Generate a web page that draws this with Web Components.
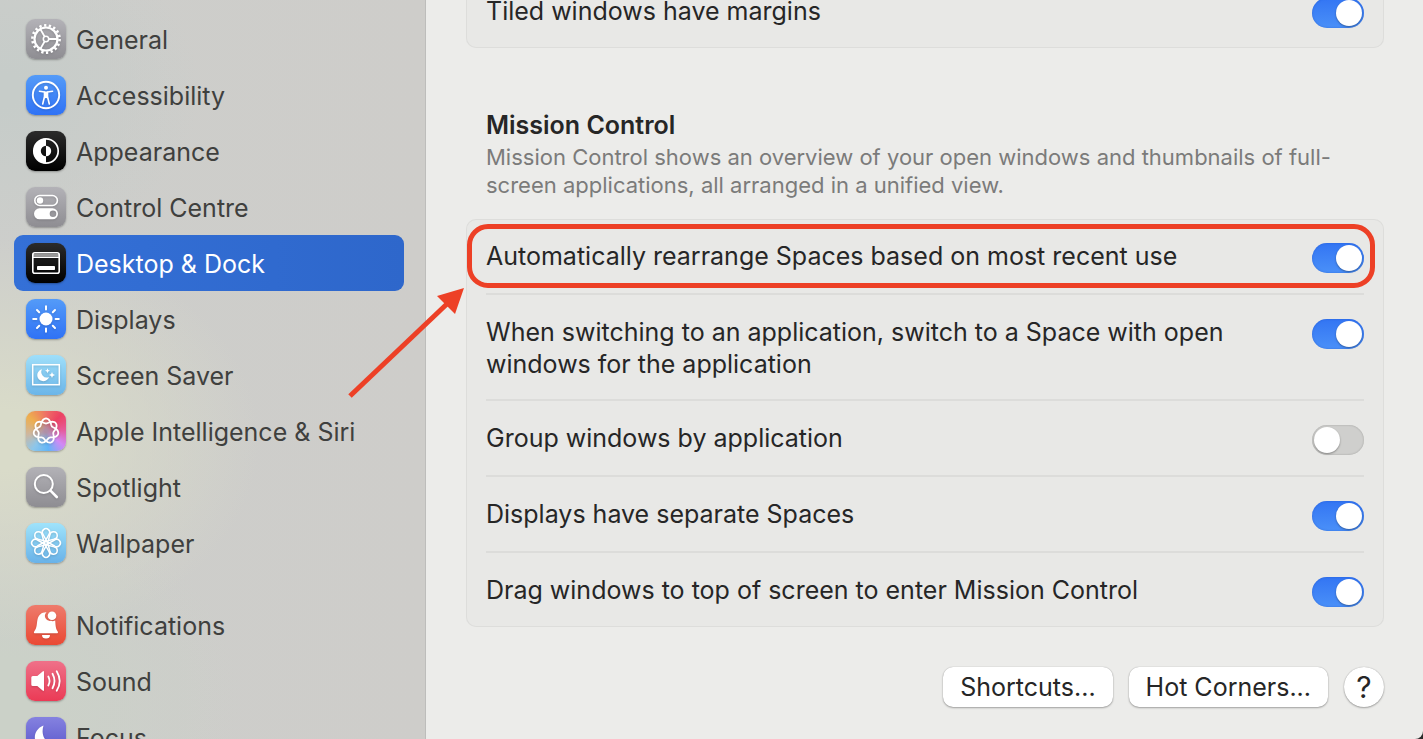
<!DOCTYPE html>
<html lang="en-GB">
<head>
<meta charset="utf-8">
<title>Desktop &amp; Dock</title>
<style>
  html, body { height: 100%; }
  body {
    margin: 0;
    overflow: hidden;
    background: #2a2a2a;
    font-family: Inter, "Liberation Sans", sans-serif;
    font-size: 25px;
    line-height: 32px;
    color: #262626;
  }
</style>
</head>
<body>
<settings-window></settings-window>

<script>
/* Closed curve that winds twice round the centre and forms seven crossing lobes. */
const knot = 'M' + Array.from({length: 168}, (_, i) => {
  const t = i / 168 * 4 * Math.PI, r = 10 + 2.5 * Math.cos(3.5 * t);
  return (20 + r * Math.sin(t)).toFixed(2) + ' ' + (20 - r * Math.cos(t)).toFixed(2);
}).join('L') + 'Z';

const icons = {
  general: ['#b3b2b7', '#8e8d92', `
    <g fill="none" stroke="#fff">
      <circle cx="20" cy="20" r="11.5" stroke-width="2.2"/>
      <circle cx="20" cy="20" r="13.6" stroke-width="2.6" stroke-dasharray="2.3 2.447"/>
      <circle cx="20" cy="20" r="2.7" stroke-width="1.6"/>
      <path d="M23 20h8M18.500 17.400l-4-7M18.500 22.600l-4 7" stroke-width="1.9"/>
    </g>`],
  accessibility: ['#549bf8', '#2f72f5', `
    <circle cx="20" cy="20" r="13.2" fill="none" stroke="#fff" stroke-width="1.9"/>
    <circle cx="20" cy="12.700" r="2" fill="#fff"/>
    <path d="M13.500 16.200l5 .8v4.500l-1.800 7.500M26.500 16.200l-5 .8v4.500l1.800 7.500" fill="none" stroke="#fff" stroke-width="1.600" stroke-linecap="round" stroke-linejoin="round"/>
    <path d="M18 16.500h4v7l-2-.5-2 .5z" fill="#fff"/>`],
  appearance: ['#2b2b2b', '#000', `
    <circle cx="20" cy="20" r="12.200" fill="none" stroke="#fff" stroke-width="1.700"/>
    <path d="M20 7.500a12.500 12.500 0 0 0 0 25v-7.300a5.200 5.200 0 0 1 0-10.400z" fill="#fff"/>
    <path d="M20 14.800a5.200 5.200 0 0 1 0 10.400z" fill="#fff"/>`],
  control: ['#b3b2b7', '#8e8d92', `
    <rect x="8.800" y="8.500" width="22.600" height="10" rx="5" fill="none" stroke="#fff" stroke-width="1.600"/>
    <circle cx="14" cy="13.500" r="3.200" fill="#fff"/>
    <path d="M13.500 21.300h13a5.500 5.500 0 0 1 0 11h-13a5.500 5.500 0 0 1 0-11zm13.500 2.200a3.300 3.300 0 1 0 0 6.600 3.300 3.300 0 0 0 0-6.600z" fill="#fff" fill-rule="evenodd"/>`],
  dock: ['#2b2b2b', '#000', `
    <rect x="6.800" y="9.800" width="26.400" height="20.400" rx="2" fill="none" stroke="#fff" stroke-width="1.600"/>
    <path d="M7 11h26v4H7z" fill="#fff" opacity=".55"/><path d="M7 14.500h26" stroke="#fff"/>
    <rect x="11" y="23" width="18" height="4" rx=".8" fill="#fff"/>`],
  displays: ['#549bf8', '#2f72f5', `
    <circle cx="20" cy="20" r="6.500" fill="#fff"/>
    <path d="M20 7.200v3.200M20 29.600v3.200M7.200 20h3.200M29.600 20h3.200M11 11l2.200 2.200M26.800 26.800l2.200 2.200M29 11l-2.200 2.200M13.200 26.800L11 29" stroke="#fff" stroke-width="2" stroke-linecap="round"/>`],
  saver: ['#9fdffa', '#6bb5e8', `
    <rect x="6.700" y="9.700" width="26.600" height="20" fill="none" stroke="#fff" stroke-width="1.500"/>
    <path d="M16 14.300a6 6 0 1 0 7 7.700 5.500 5.500 0 0 1-7-7.700z" fill="#fff"/>
    <path d="M21.500 13.300l.7 1.800 1.800.7-1.800.7-.7 1.800-.7-1.800-1.800-.7 1.800-.7zM26 17l.9 2.100 2.100.9-2.100.9L26 23l-.9-2.100L23 20l2.100-.9z" fill="#fff"/>`],
  siri: ['', '', `<path d="${knot}" fill="none" stroke="#fff" stroke-width="1.800"/>`],
  spotlight: ['#b3b2b7', '#8e8d92', `
    <circle cx="17.800" cy="17" r="9" fill="none" stroke="#fff" stroke-width="2"/>
    <path d="M24.500 23.700l6.300 6.300" stroke="#fff" stroke-width="2.600" stroke-linecap="round"/>`],
  wallpaper: ['#9fe3fb', '#69b2e8', `
    <g fill="none" stroke="#fff" stroke-width="1.500">${
      Array.from({length: 8}, (_, i) => `<path transform="rotate(${i * 45} 20 20)" d="M21.500 19.500L17 11.500A3.700 3.700 0 1 1 23 11.500L18.500 19.500"/>`).join('')}</g>`],
  notifications: ['#ee7b6c', '#ea4934', `
    <path d="M20.500 7.300a5 5 0 0 0 4.500 8.500q1.800.8 4.200-.3c.4 6 .6 8.500 2.500 11 .6.900.2 1.800-.8 1.800H9c-1 0-1.400-.9-.8-1.800 3-3.800 2.300-7 3.300-12C12.500 9.800 16 7 20.500 7.300z" fill="#fff"/>
    <circle cx="26" cy="10.800" r="4.300" fill="#fff"/>
    <path d="M16 30h8a4 3.500 0 0 1-8 0z" fill="#fff"/>`],
  sound: ['#ef7189', '#eb3a55', `
    <path d="M5.300 16.500q0-1.500 1.500-1.500h4.500l5.300-4.500q1.400-1 1.400.6v17.800q0 1.600-1.400.6L11.300 25H6.800q-1.500 0-1.500-1.500z" fill="#fff"/>
    <path d="M22.300 15.500q2.500 4.500 0 9M26.500 12.800q4 7.200 0 14.400M30.700 10.200q6 9.800 0 19.600" fill="none" stroke="#fff" stroke-width="1.800" stroke-linecap="round"/>`],
  focus: ['#8582e0', '#5450c8', `
    <path d="M17.500 8.500C11 11 8 17 9 22.500c1.200 6 6.500 10 12.500 9.500 4.500-.3 8-3 10-7C21 28.500 14 20 17.500 8.500z" fill="#fff"/>`]
};

class AppIcon extends HTMLElement {
  connectedCallback() {
    const [top, bottom, art] = icons[this.getAttribute('name')];
    const fill = top ? `linear-gradient(${top}, ${bottom})`
      : `radial-gradient(circle at 50% 50%, #b08fa6 5%, transparent 45%),
         conic-gradient(from 0deg, #ee7065, #ec4262 12%, #e65b9a 24%, #d08af5 36%, #62b5f7 48%, #8dc6ea 60%, #cdb7a0 72%, #eeae4e 86%, #ee7065)`;
    this.attachShadow({mode: 'open'}).innerHTML = `
      <style>
        :host { display: block; flex: none; width: 40px; height: 40px; border-radius: 9px;
          background: ${fill}; box-shadow: 0 1px 2px rgb(0 0 0 / .3); }
        svg { display: block; filter: drop-shadow(0 1px 1px rgb(0 0 0 / .15)); }
      </style>
      <svg width="40" height="40" viewBox="0 0 40 40" aria-hidden="true">${art}</svg>`;
  }
}

class SidebarItem extends HTMLElement {
  connectedCallback() {
    this.attachShadow({mode: 'open'}).innerHTML = `
      <style>
        :host { display: block; }
        a { display: flex; align-items: center; gap: 10px; height: 56px; padding: 0 12px;
          border-radius: 9px; color: #3f403e; text-decoration: none; white-space: nowrap; }
        :host([selected]) a { background: linear-gradient(90deg, #3470d7, #2e67cb); color: #fff; }
        span { padding-top: 2px; }
      </style>
      <a href="#"${this.hasAttribute('selected') ? ' aria-current="page"' : ''}>
        <app-icon name="${this.getAttribute('icon')}"></app-icon><span><slot></slot></span>
      </a>`;
  }
}

class SideBar extends HTMLElement {
  connectedCallback() {
    this.attachShadow({mode: 'open'}).innerHTML = `
      <style>
        :host { display: block; box-sizing: border-box; flex: none; width: 426px; padding: 11px 21px 0 14px;
          border-right: 1px solid #bdbdbb;
          background:
            radial-gradient(ellipse 260px 200px at 0 440px, #d9dbc9 15%, transparent),
            radial-gradient(ellipse 200px 160px at 0 90px, #c6ccc9 10%, transparent),
            radial-gradient(ellipse 240px 200px at 0 700px, #cbd1c8 20%, transparent),
            linear-gradient(90deg, #cdcecb, #cecdca); }
        nav { display: flex; flex-direction: column; }
        ::slotted(hr) { width: 100%; height: 26px; margin: 0; border: 0; }
      </style>
      <nav aria-label="Settings"><slot></slot></nav>`;
  }
}

class ToggleSwitch extends HTMLElement {
  connectedCallback() {
    this.attachShadow({mode: 'open'}).innerHTML = `
      <style>
        :host { display: block; flex: none; width: 52px; height: 30px; }
        input { appearance: none; display: flex; align-items: center; box-sizing: border-box;
          width: 52px; height: 30px; margin: 0; padding: 0 2px; border-radius: 15px;
          background: #cfcfcd; box-shadow: inset 0 0 2px rgb(0 0 0 / .25); }
        input::before { content: ""; width: 26px; height: 26px; border-radius: 50%;
          background: #fff; box-shadow: 0 1px 2px rgb(0 0 0 / .35); }
        input:checked { justify-content: flex-end; background: linear-gradient(#3375f3, #4a90f8);
          box-shadow: inset 0 0 2px rgb(20 70 190 / .5); }
      </style>
      <input type="checkbox" role="switch" aria-label="${this.getAttribute('label')}"${this.hasAttribute('on') ? ' checked' : ''}>`;
  }
}

class SettingRow extends HTMLElement {
  connectedCallback() {
    this.attachShadow({mode: 'open'}).innerHTML = `
      <style>
        :host { display: block; position: relative; border-bottom: 2px solid #dcdcda; }
        :host(:last-of-type) { border-bottom: 0; }
        label { display: flex; align-items: flex-start; justify-content: space-between;
          gap: 48px; padding: 21px 0 21px; min-height: 32px; }
        :host([tall]) label { padding-bottom: 19px; }
        toggle-switch { margin: 3px 0 -1px; }
      </style>
      <label><span><slot></slot></span>
        <toggle-switch label="${this.textContent.trim()}"${this.hasAttribute('on') ? ' on' : ''}></toggle-switch></label>
      <slot name="callout"></slot>`;
  }
}

class SettingCard extends HTMLElement {
  connectedCallback() {
    this.attachShadow({mode: 'open'}).innerHTML = `
      <style>
        :host { display: block; padding: 0 20px; border-radius: 10px; background: #e8e8e6;
          box-shadow: inset 0 0 0 1px #dddddb; }
      </style>
      <slot></slot>`;
  }
}

class CallOut extends HTMLElement {
  connectedCallback() {
    this.attachShadow({mode: 'open'}).innerHTML = `
      <style>
        :host { position: absolute; inset: 5px -11px 5px -19px; box-sizing: border-box;
          border: 5px solid #ed4026; border-radius: 21px; pointer-events: none; }
        svg { position: absolute; right: 100%; top: 56px; margin-right: 5px; overflow: visible; }
      </style>
      <svg width="120" height="112" viewBox="0 0 120 112" aria-hidden="true">
        <path d="M3 111L102 17" stroke="#ed4026" stroke-width="5" fill="none"/>
        <path d="M117 3L90 11L108 29z" fill="#ed4026"/>
      </svg>`;
  }
}

class PushButton extends HTMLElement {
  connectedCallback() {
    this.attachShadow({mode: 'open'}).innerHTML = `
      <style>
        :host { display: block; }
        button { display: block; height: 40px; padding: 0 17px; border: 0; border-radius: 10px; background: #fff;
          font: inherit; color: inherit; box-shadow: 0 0 1px rgb(0 0 0 / .3), 0 1px 2px rgb(0 0 0 / .3); }
        :host([round]) button { width: 40px; padding: 0; border-radius: 50%; font-size: 30px; }
      </style>
      <button type="button"><slot></slot></button>`;
  }
}

class SettingsWindow extends HTMLElement {
  connectedCallback() {
    this.attachShadow({mode: 'open'}).innerHTML = `
      <style>
        :host { display: flex; height: 100%; overflow: hidden; background: #ececea; border-bottom-right-radius: 8px; }
        main { flex: 1; min-width: 0; margin-top: -26px; padding: 0 39px 0 40px; }
        h2 { margin: 61px 20px 0; font-size: 25px; line-height: 32px; font-weight: 600; }
        p { margin: 2px 20px 20px; font-size: 22px; line-height: 28px; color: #7b7b7a; }
        footer { display: flex; justify-content: flex-end; gap: 16px; margin-top: 40px; }
      </style>
      <side-bar>
        <sidebar-item icon="general">General</sidebar-item>
        <sidebar-item icon="accessibility">Accessibility</sidebar-item>
        <sidebar-item icon="appearance">Appearance</sidebar-item>
        <sidebar-item icon="control">Control Centre</sidebar-item>
        <sidebar-item icon="dock" selected>Desktop &amp; Dock</sidebar-item>
        <sidebar-item icon="displays">Displays</sidebar-item>
        <sidebar-item icon="saver">Screen Saver</sidebar-item>
        <sidebar-item icon="siri">Apple Intelligence &amp; Siri</sidebar-item>
        <sidebar-item icon="spotlight">Spotlight</sidebar-item>
        <sidebar-item icon="wallpaper">Wallpaper</sidebar-item>
        <hr>
        <sidebar-item icon="notifications">Notifications</sidebar-item>
        <sidebar-item icon="sound">Sound</sidebar-item>
        <sidebar-item icon="focus">Focus</sidebar-item>
      </side-bar>
      <main>
        <setting-card><setting-row on>Tiled windows have margins</setting-row></setting-card>
        <h2>Mission Control</h2>
        <p>Mission Control shows an overview of your open windows and thumbnails of full-screen applications, all arranged in a unified view.</p>
        <setting-card>
          <setting-row on>Automatically rearrange Spaces based on most recent use<call-out slot="callout"></call-out></setting-row>
          <setting-row on tall>When switching to an application, switch to a Space with open windows for the application</setting-row>
          <setting-row>Group windows by application</setting-row>
          <setting-row on>Displays have separate Spaces</setting-row>
          <setting-row on>Drag windows to top of screen to enter Mission Control</setting-row>
        </setting-card>
        <footer>
          <push-button>Shortcuts...</push-button>
          <push-button>Hot Corners...</push-button>
          <push-button round>?</push-button>
        </footer>
      </main>`;
  }
}

customElements.define('app-icon', AppIcon);
customElements.define('toggle-switch', ToggleSwitch);
customElements.define('call-out', CallOut);
customElements.define('push-button', PushButton);
customElements.define('sidebar-item', SidebarItem);
customElements.define('side-bar', SideBar);
customElements.define('setting-row', SettingRow);
customElements.define('setting-card', SettingCard);
customElements.define('settings-window', SettingsWindow);
</script>
</body>
</html>
